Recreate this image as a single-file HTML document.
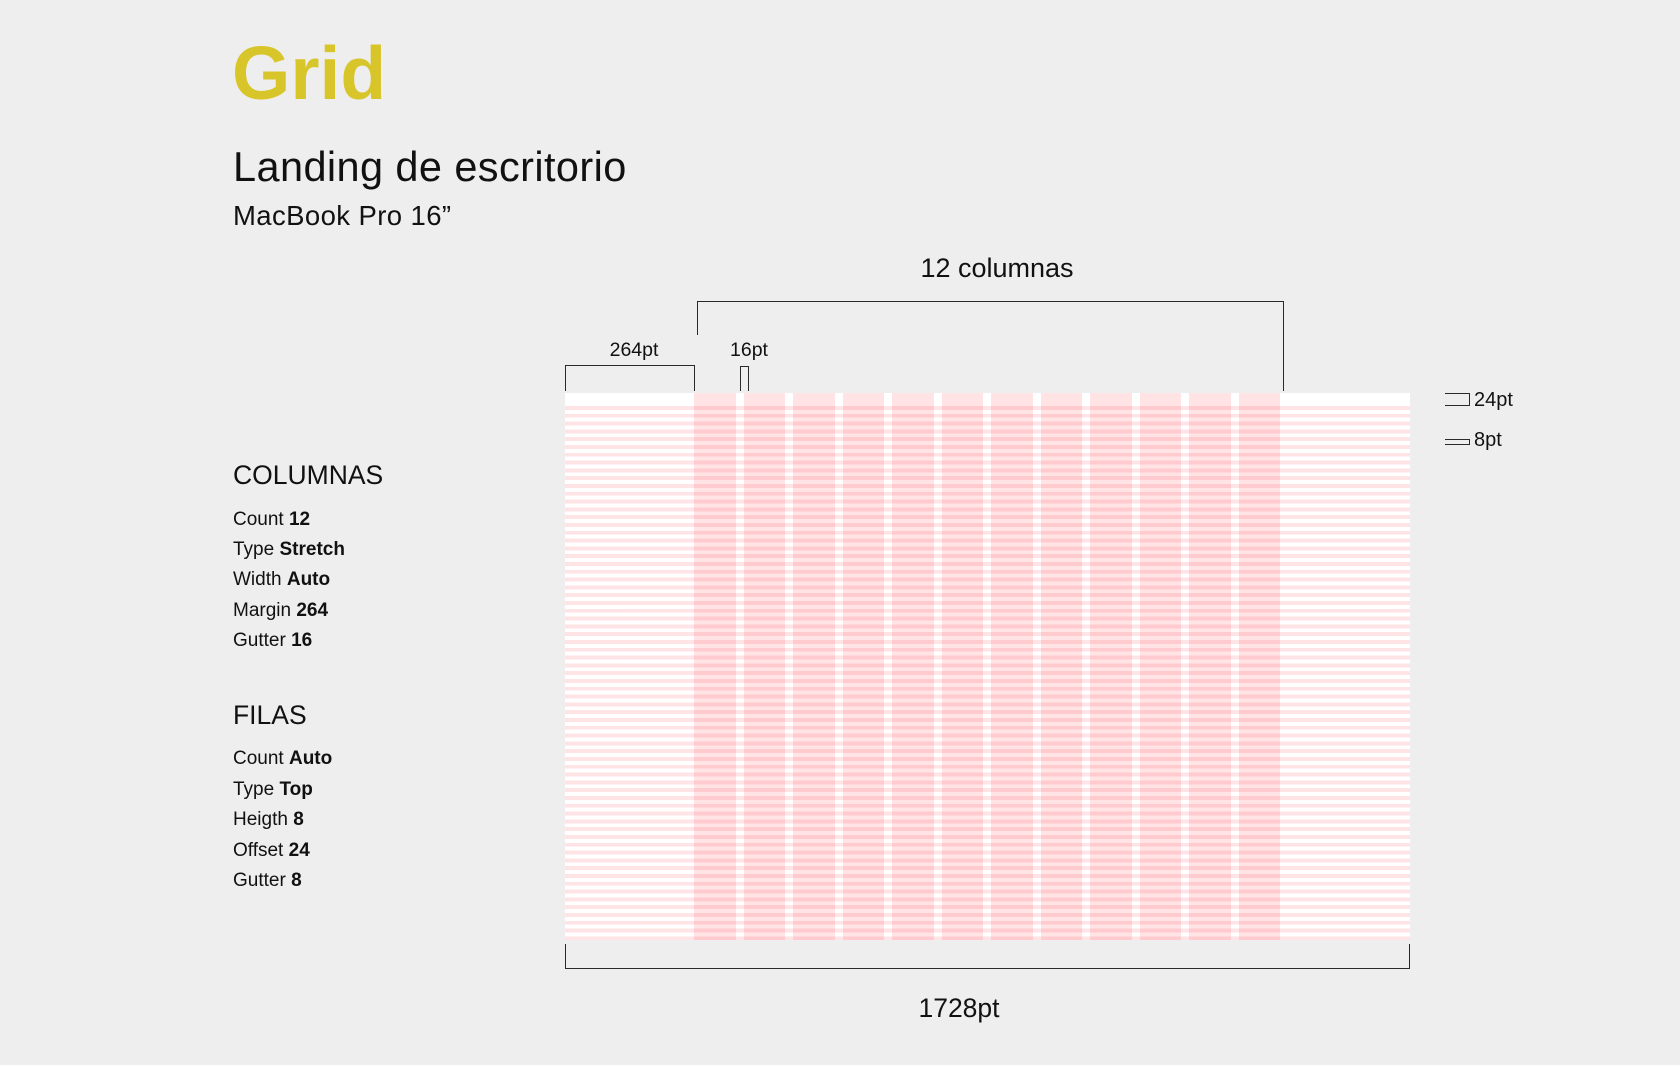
<!DOCTYPE html>
<html><head><meta charset="utf-8"><style>
html,body{margin:0;padding:0}
body{width:1680px;height:1065px;background:#eeeeee;position:relative;overflow:hidden;font-family:"Liberation Sans",sans-serif;color:#111}
.a{position:absolute;white-space:nowrap}
.l{position:absolute;background:#2a2a2a}
b{font-weight:bold}
.lab{font-size:19px;line-height:22px;left:233px}
#grid{position:absolute;left:565px;top:393px;width:845px;height:547px;background:#fff;overflow:hidden}
#rows{position:absolute;left:0;right:0;top:12.5px;bottom:0;background:repeating-linear-gradient(to bottom,rgba(255,60,80,0.14) 0,rgba(255,60,80,0.14) 3.9px,transparent 3.9px,transparent 7.8px)}
.col{position:absolute;top:0;bottom:0;width:41.7px;background:rgba(255,60,70,0.14)}
</style></head><body>
<div class="a" style="left:232px;top:28px;font-size:75px;line-height:90px;color:#d8c52a;font-weight:bold">Grid</div>
<div class="a" style="left:233px;top:142px;font-size:41.5px;line-height:50px;letter-spacing:0.4px">Landing de escritorio</div>
<div class="a" style="left:233px;top:199px;font-size:27.5px;line-height:34px;letter-spacing:0.4px">MacBook Pro 16”</div>

<div class="a" style="left:233px;top:459px;font-size:26.5px;line-height:32px">COLUMNAS</div>
<div class="a lab" style="top:509px">Count <b>12</b></div>
<div class="a lab" style="top:539px">Type <b>Stretch</b></div>
<div class="a lab" style="top:569px">Width <b>Auto</b></div>
<div class="a lab" style="top:600px">Margin <b>264</b></div>
<div class="a lab" style="top:630px">Gutter <b>16</b></div>

<div class="a" style="left:233px;top:699px;font-size:26.5px;line-height:32px">FILAS</div>
<div class="a lab" style="top:748px">Count <b>Auto</b></div>
<div class="a lab" style="top:779px">Type <b>Top</b></div>
<div class="a lab" style="top:809px">Heigth <b>8</b></div>
<div class="a lab" style="top:840px">Offset <b>24</b></div>
<div class="a lab" style="top:870px">Gutter <b>8</b></div>

<div class="a" style="left:887px;top:252px;width:220px;text-align:center;font-size:27px;line-height:32px">12 columnas</div>
<div class="l" style="left:697px;top:301px;width:587px;height:1px"></div>
<div class="l" style="left:697px;top:301px;width:1px;height:34px"></div>
<div class="l" style="left:1283px;top:301px;width:1px;height:90px"></div>

<div class="a" style="left:584px;top:339px;width:100px;text-align:center;font-size:19.5px;line-height:22px">264pt</div>
<div class="l" style="left:565px;top:365px;width:130px;height:1px"></div>
<div class="l" style="left:565px;top:365px;width:1px;height:26px"></div>
<div class="l" style="left:694px;top:365px;width:1px;height:26px"></div>

<div class="a" style="left:709px;top:339px;width:80px;text-align:center;font-size:19.5px;line-height:22px">16pt</div>
<div class="l" style="left:740px;top:366px;width:9px;height:1px"></div>
<div class="l" style="left:740px;top:366px;width:1px;height:25px"></div>
<div class="l" style="left:748px;top:366px;width:1px;height:25px"></div>

<div id="grid"><div id="rows"></div>
<div class="col" style="left:129px"></div><div class="col" style="left:178.5px"></div><div class="col" style="left:228px"></div><div class="col" style="left:277.5px"></div><div class="col" style="left:327px"></div><div class="col" style="left:376.5px"></div><div class="col" style="left:426px"></div><div class="col" style="left:475.5px"></div><div class="col" style="left:525px"></div><div class="col" style="left:574.5px"></div><div class="col" style="left:624px"></div><div class="col" style="left:673.5px"></div>
</div>

<div class="l" style="left:1445px;top:393px;width:25px;height:1px"></div>
<div class="l" style="left:1445px;top:405px;width:25px;height:1px"></div>
<div class="l" style="left:1469px;top:393px;width:1px;height:13px"></div>
<div class="a" style="left:1474px;top:389px;font-size:20px;line-height:22px">24pt</div>
<div class="l" style="left:1445px;top:439px;width:25px;height:1px"></div>
<div class="l" style="left:1445px;top:444px;width:25px;height:1px"></div>
<div class="l" style="left:1469px;top:439px;width:1px;height:6px"></div>
<div class="a" style="left:1474px;top:429px;font-size:20px;line-height:22px">8pt</div>

<div class="l" style="left:565px;top:944px;width:1px;height:25px"></div>
<div class="l" style="left:1409px;top:944px;width:1px;height:25px"></div>
<div class="l" style="left:565px;top:968px;width:845px;height:1px"></div>
<div class="a" style="left:859px;top:993px;width:200px;text-align:center;font-size:26.5px;line-height:30px">1728pt</div>
</body></html>
